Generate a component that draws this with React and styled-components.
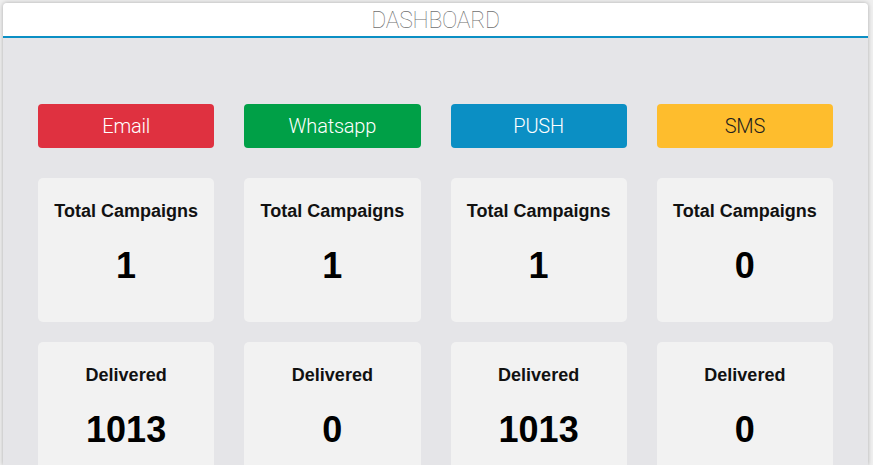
import React from "react";
import styled, { createGlobalStyle } from "styled-components";

const channels = [
  { name: "Email", color: "#df3140", text: "#fff", campaigns: 1, delivered: 1013 },
  { name: "Whatsapp", color: "#00a047", text: "#fff", campaigns: 1, delivered: 0 },
  { name: "PUSH", color: "#0b8fc4", text: "#fff", campaigns: 1, delivered: 1013 },
  { name: "SMS", color: "#febd2d", text: "#1e1e1e", campaigns: 0, delivered: 0 },
];

const GlobalStyle = createGlobalStyle`
  html, body {
    margin: 0;
    padding: 0;
    background: #efefef;
    overflow: hidden;
  }
  body {
    font-family: "Liberation Sans", Arial, sans-serif;
  }
`;

const App = () => {
  return (
    <>
      <GlobalStyle />
      <Page>
        <Panel>
          <Header>
            <HeaderTitle>DASHBOARD</HeaderTitle>
          </Header>
          <Body>
            <Row gap="30px">
              {channels.map((c) => (
                <ChannelButton key={c.name} bg={c.color} fg={c.text}>
                  {c.name}
                </ChannelButton>
              ))}
            </Row>
            <Row gap="20px">
              {channels.map((c) => (
                <StatCard key={c.name}>
                  <StatLabel>Total Campaigns</StatLabel>
                  <StatValue>{c.campaigns}</StatValue>
                </StatCard>
              ))}
            </Row>
            <Row gap="20px">
              {channels.map((c) => (
                <StatCard key={c.name}>
                  <StatLabel>Delivered</StatLabel>
                  <StatValue>{c.delivered}</StatValue>
                </StatCard>
              ))}
            </Row>
          </Body>
        </Panel>
      </Page>
    </>
  );
};
export default App;

//----------------------------------------------------------------
const Page = styled.div`
  padding: 3px 5px 0 3px;
  height: 100vh;
  box-sizing: border-box;
`;

const Panel = styled.div`
  height: 100%;
  border-radius: 4px 4px 0 0;
  background: #e5e5e8;
  box-shadow: 0 0 4px rgba(0, 0, 0, 0.28);
  overflow: hidden;
  display: flex;
  flex-direction: column;
`;

const Header = styled.div`
  flex-shrink: 0;
  height: 33px;
  background: #fff;
  border-bottom: 2px solid #0b8fc4;
  display: flex;
  align-items: center;
  justify-content: center;
`;

const HeaderTitle = styled.div`
  font-family: Roboto, "Liberation Sans", sans-serif;
  font-weight: 100;
  font-size: 23px;
  color: #6f6f6f;
  letter-spacing: -0.3px;
  margin-top: 1px;
`;

//----------------------------------------------------------------
const Body = styled.div`
  flex-shrink: 0;
  padding: 66px 35px 0 35px;
`;

const Row = styled.div`
  display: grid;
  grid-template-columns: repeat(4, 1fr);
  column-gap: 30px;
  margin-bottom: ${(props) => props.gap};
`;

const ChannelButton = styled.div`
  height: 44px;
  border-radius: 4px;
  background: ${(props) => props.bg};
  color: ${(props) => props.fg};
  display: flex;
  align-items: center;
  justify-content: center;
  font-family: Roboto, "Liberation Sans", sans-serif;
  font-weight: 300;
  font-size: 20px;
  letter-spacing: -0.2px;
`;

const StatCard = styled.div`
  height: 144px;
  border-radius: 5px;
  background: #f2f2f2;
  display: flex;
  flex-direction: column;
  align-items: center;
  padding-top: 24px;
  box-sizing: border-box;
`;

const StatLabel = styled.div`
  font-size: 18px;
  line-height: 18px;
  font-weight: 700;
  color: #111;
`;

const StatValue = styled.div`
  margin-top: 26px;
  font-size: 36px;
  line-height: 40px;
  font-weight: 700;
  color: #000;
`;
